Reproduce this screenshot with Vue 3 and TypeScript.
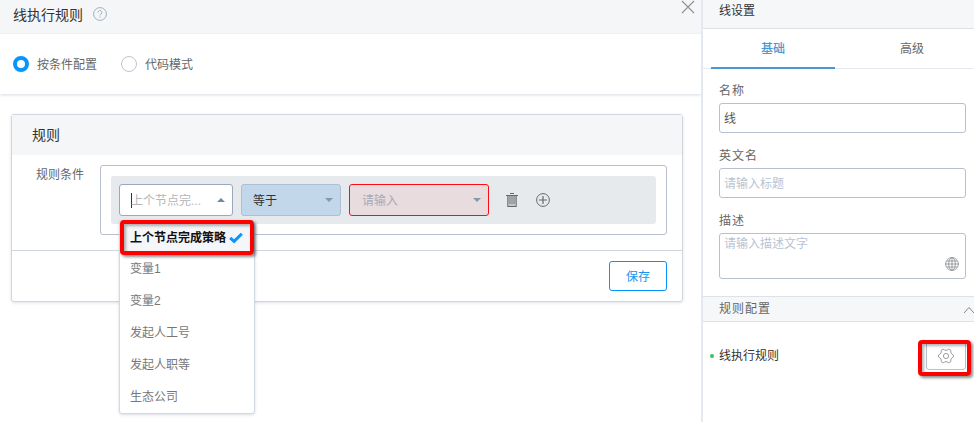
<script setup lang="ts">
import { ref } from 'vue'

type Mode = 'condition' | 'code'
type Tab = 'basic' | 'advanced'

const mode = ref<Mode>('condition')
const modes: { key: Mode; label: string }[] = [
  { key: 'condition', label: '按条件配置' },
  { key: 'code', label: '代码模式' },
]

const tab = ref<Tab>('basic')
const tabs: { key: Tab; label: string }[] = [
  { key: 'basic', label: '基础' },
  { key: 'advanced', label: '高级' },
]

const options: string[] = ['上个节点完成策略', '变量1', '变量2', '发起人工号', '发起人职等', '生态公司']
const selected = ref<string>(options[0])
</script>

<template>
  <div class="page">
    <main class="main">
      <header class="main-head">
        <span class="title">线执行规则</span>
        <svg class="help" viewBox="0 0 14 14" width="14" height="14" fill="none" stroke="#a3aec0">
          <circle cx="7" cy="7" r="6.4" />
          <path d="M5.1 5.5a1.9 1.9 0 1 1 2.9 1.5c-.7.4-1 .8-1 1.4M7 9.6v1.2" />
        </svg>
        <svg class="close" viewBox="0 0 14 14" width="14" height="14" fill="none" stroke="#8f9194" stroke-width="1.1">
          <path d="M1 1l12 12M13 1L1 13" />
        </svg>
      </header>

      <div class="modes">
        <label v-for="m in modes" :key="m.key" class="mode" @click="mode = m.key">
          <i class="radio" :class="{ on: mode === m.key }"></i>
          <span>{{ m.label }}</span>
        </label>
      </div>

      <section class="card">
        <h3 class="card-head">规则</h3>
        <div class="card-body">
          <span class="cond-label">规则条件</span>
          <div class="cond-box">
            <div class="cond-row">
              <div class="select field-select">
                <span class="caret-text">上个节点完...</span>
                <i class="arrow up"></i>
                <div class="menu">
                  <div
                    v-for="o in options"
                    :key="o"
                    class="option"
                    :class="{ active: o === selected }"
                    @click="selected = o"
                  >
                    <span>{{ o }}</span>
                    <svg v-if="o === selected" viewBox="0 0 14 12" width="14" height="12" fill="none" stroke="#0d94fb" stroke-width="3">
                      <path d="M1.2 5.8l3.9 3.6L12.8 1.8" />
                    </svg>
                  </div>
                </div>
                <div class="mark mark-option"></div>
              </div>
              <div class="select op-select"><span>等于</span><i class="arrow"></i></div>
              <div class="select value-select"><span>请输入</span><i class="arrow"></i></div>
              <svg class="trash" viewBox="0 0 12 14" width="12" height="14">
                <path d="M1 3h10v11H1z" fill="#a0a2a4" />
                <path d="M4 .5h4M0 2.5h12M1 13.5h10" stroke="#66686a" fill="none" />
                <path d="M2.5 12h7" stroke="#e6eaed" />
                <path d="M1.5 3v11M10.5 3v11" stroke="#8b8d90" />
              </svg>
              <svg class="plus" viewBox="0 0 14 14" width="14" height="14" fill="none" stroke="#66696c">
                <circle cx="7" cy="7" r="6.4" />
                <path d="M7 3v8M3 7h8" stroke-width="1.2" />
              </svg>
            </div>
          </div>
        </div>
        <footer class="card-foot"><button class="save">保存</button></footer>
      </section>
    </main>

    <aside class="side">
      <header class="side-head">线设置</header>
      <nav class="tabs">
        <button v-for="t in tabs" :key="t.key" class="tab" :class="{ on: tab === t.key }" @click="tab = t.key">
          {{ t.label }}
        </button>
      </nav>
      <div class="form">
        <div class="item">
          <span class="label">名称</span>
          <div class="input value">线</div>
        </div>
        <div class="item">
          <span class="label">英文名</span>
          <div class="input">请输入标题</div>
        </div>
        <div class="item">
          <span class="label">描述</span>
          <div class="input area">
            请输入描述文字
            <svg class="globe" viewBox="0 0 14 14" width="14" height="14" fill="none" stroke="#929496" stroke-width=".9">
              <circle cx="7" cy="7" r="6.4" />
              <ellipse cx="7" cy="7" rx="3.3" ry="6.4" />
              <path d="M7 .6v12.8M.6 7h12.8M1.6 4h10.8M1.6 10h10.8" />
            </svg>
          </div>
        </div>
      </div>
      <div class="group-head">
        <span>规则配置</span>
        <svg viewBox="0 0 12 8" width="12" height="8" fill="none" stroke="#85878a">
          <path d="M1 7l5-5.5L11 7" />
        </svg>
      </div>
      <div class="rule">
        <i class="dot"></i>
        <span class="rule-name">线执行规则</span>
        <button class="gear">
          <svg viewBox="0 0 16 16" width="16" height="16" fill="none" stroke="#909295" stroke-width=".9" stroke-linejoin="round">
            <path d="M5.2 1.2L6.7 2Q8 2.7 9.3 2L10.8 1.2L12.8 2.4V4Q12.8 5.4 14 6L15.4 7V9L14 10Q12.8 10.6 12.8 12V13.6L10.8 14.8L9.3 14Q8 13.3 6.7 14L5.2 14.8L3.2 13.6V12Q3.2 10.6 2 10L.6 9V7L2 6Q3.2 5.4 3.2 4V2.4Z" />
            <circle cx="8" cy="8" r="2.6" />
          </svg>
        </button>
        <div class="mark mark-gear"></div>
      </div>
    </aside>
  </div>
</template>

<style>
body {
  overflow: hidden;
  background: #fff;
}
</style>

<style scoped>
* {
  box-sizing: border-box;
}
.page {
  display: flex;
  width: 974px;
  height: 422px;
  overflow: hidden;
  font: 12px/18px "Liberation Sans", "Noto Sans CJK SC", sans-serif;
  color: #666;
}
button {
  font: inherit;
  background: none;
  padding: 0;
  border: 0;
}
svg {
  display: block;
  flex: none;
}
.main {
  width: 701px;
  flex: none;
}
.main-head {
  height: 34px;
  display: flex;
  background: #f5f6f8;
}
.title {
  font-size: 14px;
  line-height: 20px;
  color: #333;
  margin: 5px 0 0 13px;
}
.help {
  margin: 7px 0 0 10px;
}
.close {
  margin: 0 6px 0 auto;
}
.modes {
  height: 60px;
  display: flex;
  align-items: center;
  padding-left: 13px;
  gap: 24px;
  box-shadow: 0 1px 3px #d5dce3;
}
.mode {
  display: flex;
  align-items: center;
  gap: 8px;
}
.mode span {
  padding-top: 2px;
}
.radio {
  width: 16px;
  height: 16px;
  border: 1px solid #bcc4d4;
  border-radius: 50%;
}
.radio.on {
  border: 4px solid #0595fd;
}
.card {
  width: 672px;
  height: 188px;
  margin: 20px 0 0 11px;
  border: 1px solid #d0d6e0;
  border-radius: 3px;
  box-shadow: 0 1px 3px rgba(120, 140, 165, 0.25);
}
.card-head {
  height: 40px;
  margin: 0;
  padding-left: 20px;
  background: #f5f6f8;
  font-weight: 400;
  font-size: 14px;
  line-height: 40px;
  color: #333;
}
.card-body {
  height: 95px;
  display: flex;
  padding: 10px 15px 0 24px;
}
.cond-label {
  width: 64px;
  line-height: 20px;
}
.cond-box {
  width: 567px;
  height: 70px;
  padding: 10px;
  border: 1px solid #b8c0cf;
  border-radius: 3px;
}
.cond-row {
  height: 48px;
  display: flex;
  align-items: center;
  padding-left: 8px;
  background: #e6eaed;
  border-radius: 3px;
}
.select {
  position: relative;
  height: 32px;
  display: flex;
  align-items: center;
  justify-content: space-between;
  border: 1px solid #a9b5c8;
  border-radius: 3px;
}
.select > span {
  line-height: 20px;
}
.field-select {
  width: 114px;
  padding: 0 7px 0 12px;
  background: #fff;
  border-color: #9aa8be;
  color: #b5b5b5;
  margin-right: 8px;
}
.field-select > .caret-text {
  line-height: 14px;
  padding-top: 1px;
  margin-left: -1px;
  background: linear-gradient(#333, #333) left / 1px 100% no-repeat;
}
.op-select {
  width: 100px;
  padding: 0 7px 0 11px;
  background: #c3d7ea;
  border-color: #adc0d3;
  color: #333;
  margin-right: 8px;
}
.value-select {
  width: 140px;
  padding: 0 7px 0 12px;
  background: #e9dcdf;
  border-color: #fa0d15;
  color: #a9a9b7;
}
.op-select > span,
.value-select > span {
  padding-top: 1px;
}
.arrow {
  border: 4px solid transparent;
  border-top-color: #8499af;
  border-bottom: 0;
}
.arrow.up {
  border: 4px solid transparent;
  border-bottom-color: #7588a3;
  border-top: 0;
}
.trash {
  margin-left: 17px;
}
.plus {
  margin-left: 18px;
}
.menu {
  position: absolute;
  z-index: 1;
  left: -1px;
  top: 35px;
  width: 136px;
  height: 194px;
  padding-top: 1px;
  background: #fff;
  border: 1px solid #d3d9e2;
  border-radius: 3px;
  box-shadow: 0 1px 3px rgba(120, 140, 165, 0.3);
}
.option {
  height: 32px;
  display: flex;
  align-items: center;
  gap: 3px;
  padding: 0 0 2px 10px;
  color: #777;
}
.option.active {
  padding-bottom: 0;
  background: #f4f6f9;
  color: #111;
  font-weight: 700;
}
.mark {
  position: absolute;
  z-index: 2;
  border: 4px solid #fe0000;
  border-radius: 4px;
  box-shadow: 2px 2px 3px rgba(0, 0, 0, 0.45), inset 2px 2px 3px rgba(0, 0, 0, 0.3);
  pointer-events: none;
}
.mark-option {
  left: 0;
  top: 35px;
  width: 134px;
  height: 35px;
}
.card-foot {
  height: 51px;
  display: flex;
  justify-content: flex-end;
  padding: 10px 15px 0 0;
  border-top: 1px solid #d0d6e0;
}
.save {
  width: 58px;
  height: 30px;
  padding-top: 2px;
  border: 1px solid #0595fd;
  border-radius: 3px;
  color: #1593ee;
}
.side {
  width: 273px;
  flex: none;
  border-left: 2px solid #e4e9ef;
}
.side-head {
  height: 29px;
  padding: 2px 0 0 16px;
  background: #f6f7f9;
  border-bottom: 1px solid #dde2e9;
  color: #333;
}
.tabs {
  height: 40px;
  display: flex;
  padding-left: 8px;
  gap: 15px;
  border-bottom: 1px solid #e4e9ef;
}
.tab {
  width: 124px;
  height: 40px;
  flex: none;
  padding-top: 1px;
  color: #666;
  border-bottom: 2px solid transparent;
}
.tab.on {
  color: #4a98d2;
  border-color: #4a98d2;
  font-weight: 500;
}
.form {
  height: 227px;
  padding: 13px 8px 0 16px;
}
.item {
  height: 65px;
}
.label {
  display: block;
  height: 21px;
  letter-spacing: 1px;
}
.input {
  position: relative;
  height: 30px;
  padding-left: 4px;
  line-height: 31px;
  border: 1px solid #b8c0cf;
  border-radius: 3px;
  color: #b8c3d4;
}
.input.value {
  color: #555;
}
.input.area {
  height: 46px;
  line-height: 21px;
}
.globe {
  position: absolute;
  right: 6px;
  bottom: 7px;
}
.group-head {
  height: 26px;
  display: flex;
  align-items: center;
  justify-content: space-between;
  padding-left: 16px;
  background: #f6f7f9;
  border-top: 1px solid #dde2e9;
  border-bottom: 1px solid #dde2e9;
  letter-spacing: 1px;
}
.group-head svg {
  margin: 2px -1px 0 0;
}
.rule {
  position: relative;
  display: flex;
  align-items: center;
  height: 30px;
  margin-top: 18px;
  padding: 0 8px 0 7px;
  color: #333;
}
.dot {
  width: 4px;
  height: 4px;
  margin-top: 2px;
  border-radius: 50%;
  background: #35c75a;
}
.rule-name {
  margin: 0 auto 0 5px;
  padding-top: 2px;
}
.gear {
  width: 40px;
  height: 30px;
  padding-top: 1px;
  display: flex;
  align-items: center;
  justify-content: center;
  border: 1px solid #b8c0cf;
  border-radius: 3px;
}
.mark-gear {
  left: 215px;
  top: 0;
  width: 53px;
  height: 36px;
}
</style>
